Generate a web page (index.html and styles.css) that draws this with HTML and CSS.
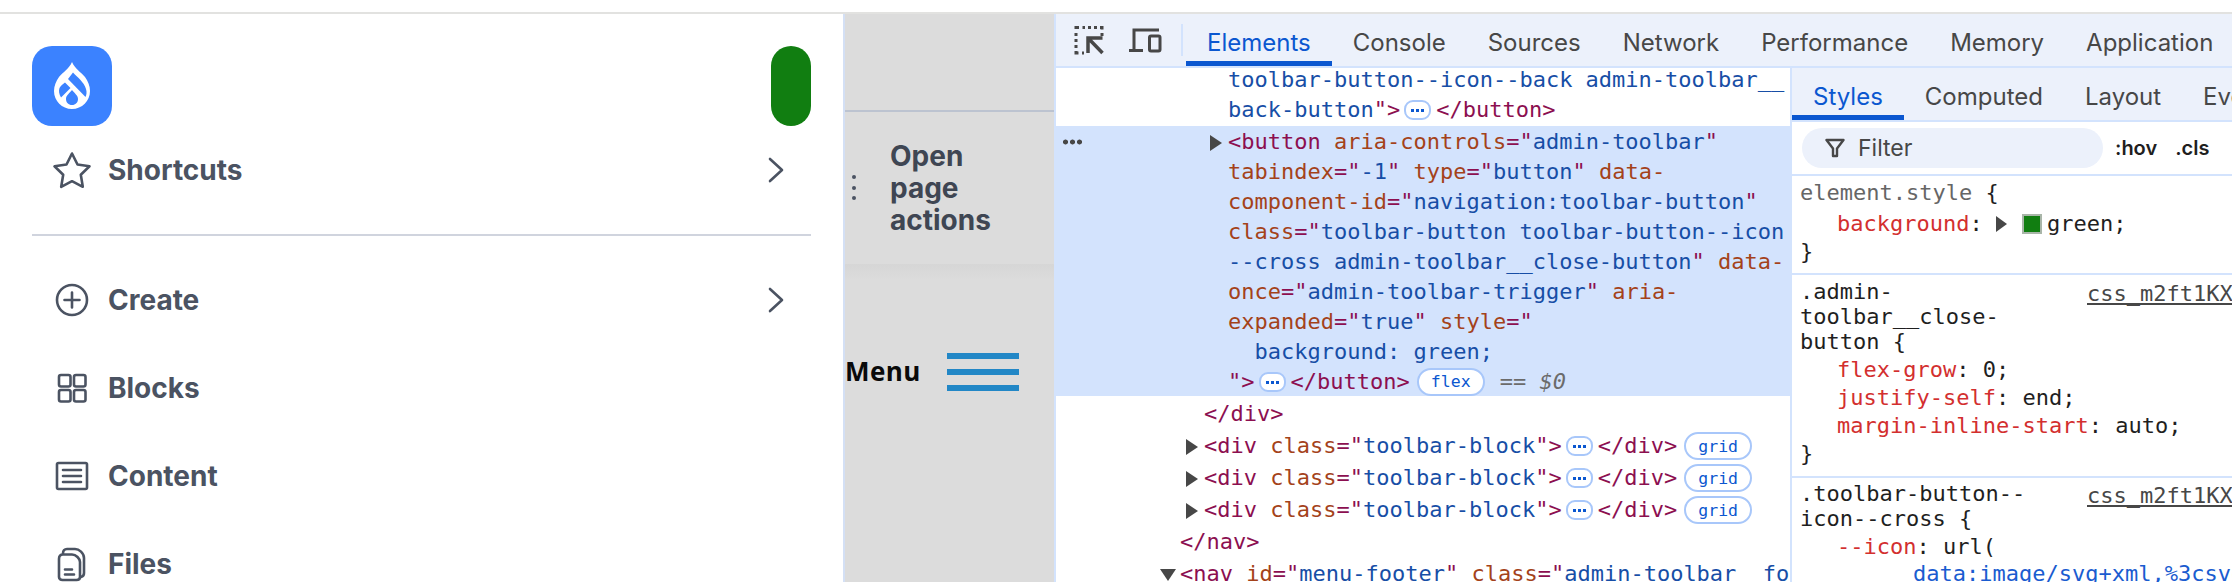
FILE: index.html
```html
<!DOCTYPE html>
<html lang="en">
<head>
<meta charset="utf-8">
<title>Drupal admin toolbar with DevTools</title>
<link rel="stylesheet" href="styles.css">
</head>
<body>
<div class="topbar"></div>
<main class="main">
  <aside class="admin">
    <div class="admin-head">
      <div class="logo">
        <svg viewBox="0 0 80 80" width="80" height="80"><path fill="#fff" d="M40 16C43 23 49 26 53 31C56 35 58 40 58 45C58 55 50 63 40 63C30 63 22 55 22 45C22 40 24 35 27 31C31 26 37 23 40 16Z"/><path fill="#3b82ff" d="M41 26.5C45 31 52 36 54 43C55 46 54.5 49 53.5 51L36 33ZM33 36.5L38.5 42L29 51.5C27 48 26.5 45 27.5 42C28.5 40 31 38 33 36.5ZM40 44C42 47 46 49 46 53C46 56.5 43.5 59 40 59C36.5 59 34 56.5 34 53C34 49 38 47 40 44Z"/></svg>
      </div>
      <div class="close-btn"></div>
    </div>
    <div class="nav-row">
      <svg class="nav-icon" viewBox="0 0 40 40"><path d="M20 3.500L25.500 14.500L37.500 16.300L28.800 24.800L30.800 36.800L20 31.200L9.200 36.800L11.200 24.800L2.500 16.300L14.500 14.500Z"/></svg>
      <span class="nav-label">Shortcuts</span>
      <svg class="chev" viewBox="0 0 16 26"><path d="M2 2L14 13L2 24"/></svg>
    </div>
    <div class="divider"></div>
    <div class="nav-row">
      <svg class="nav-icon" viewBox="0 0 40 40"><circle cx="20" cy="20" r="15"/><path d="M20 12.5V27.5M12.5 20H27.5"/></svg>
      <span class="nav-label">Create</span>
      <svg class="chev" viewBox="0 0 16 26"><path d="M2 2L14 13L2 24"/></svg>
    </div>
    <div class="nav-row">
      <svg class="nav-icon" viewBox="0 0 40 40"><rect x="7" y="7" width="11.5" height="11.5" rx="2"/><rect x="22" y="7" width="11.5" height="11.5" rx="2"/><rect x="7" y="22" width="11.5" height="11.5" rx="2"/><rect x="22" y="22" width="11.5" height="11.5" rx="2"/></svg>
      <span class="nav-label">Blocks</span>
    </div>
    <div class="nav-row">
      <svg class="nav-icon" viewBox="0 0 40 40"><rect x="5" y="7" width="30" height="26" rx="1.5"/><path d="M11 14H29M11 20H29M11 26H29"/></svg>
      <span class="nav-label">Content</span>
    </div>
    <div class="nav-row">
      <svg class="nav-icon" viewBox="0 0 40 40"><path d="M11 9.5C11 6.5 12.5 5 15 5H23C27 5 32 9 32 14V29C32 31 31 32.5 29 33"/><path d="M7 15C7 12 8.5 10.5 11 10.5H20C24 10.5 28 14.5 28 18V33C28 35 26.5 36 24.5 36H10.5C8.5 36 7 35 7 33Z"/><path d="M13 25.5H20M13 30.5H22"/></svg>
      <span class="nav-label">Files</span>
    </div>
  </aside>

  <section class="gutter">
    <div class="gutter-top"></div>
    <div class="page-actions">
      <svg class="kebab" viewBox="0 0 8 30" width="8" height="30"><circle cx="4" cy="4" r="2"/><circle cx="4" cy="15" r="2"/><circle cx="4" cy="25" r="2"/></svg>
      <span class="page-actions-label">Open<br>page<br>actions</span>
    </div>
    <div class="menu-zone">
      <span class="menu-label">Menu</span>
      <div class="burger"><i></i><i></i><i></i></div>
    </div>
  </section>

  <section class="devtools">
    <header class="dt-tabs">
      <svg class="dt-tool inspect" viewBox="0 0 30 30" width="30" height="30"><path class="dotted" d="M2 4V2.5H5M8.500 2.5H11M14 2.500H17M20 2.500H23M26 2.500H28V4.500M28 8V11M2 8V11M2 14V17M2 20V23M2 26V28H4.500M8 28H10"/><path class="arrow" d="M14 28V13H28.500M14 13L28.500 28"/></svg>
      <svg class="dt-tool device" viewBox="0 0 34 26" width="34" height="26"><path d="M6 22V3H31"/><path d="M1 23.500H15"/><rect x="21.500" y="9" width="10.500" height="15" rx="1.500"/></svg>
      <span class="dt-sep"></span>
      <span class="dt-tab active">Elements</span>
      <span class="dt-tab">Console</span>
      <span class="dt-tab">Sources</span>
      <span class="dt-tab">Network</span>
      <span class="dt-tab">Performance</span>
      <span class="dt-tab">Memory</span>
      <span class="dt-tab">Application</span>
    </header>
    <div class="dt-body">
      <div class="dom">
        <div class="ln lv3 first"><span class="v">toolbar-button--icon--back admin-toolbar__</span></div>
        <div class="ln lv3"><span class="v">back-button</span><span class="t">"&gt;</span><span class="dots"></span><span class="t">&lt;/button&gt;</span></div>
        <div class="selected">
          <div class="gutter-dots"></div>
          <div class="ln lv3"><i class="tri"></i><span class="t">&lt;button</span> <span class="a">aria-controls</span><span class="t">="</span><span class="v">admin-toolbar</span><span class="t">"</span></div>
          <div class="ln lv3"><span class="a">tabindex</span><span class="t">="</span><span class="v">-1</span><span class="t">"</span> <span class="a">type</span><span class="t">="</span><span class="v">button</span><span class="t">"</span> <span class="a">data-</span></div>
          <div class="ln lv3"><span class="a">component-id</span><span class="t">="</span><span class="v">navigation:toolbar-button</span><span class="t">"</span></div>
          <div class="ln lv3"><span class="a">class</span><span class="t">="</span><span class="v">toolbar-button toolbar-button--icon</span></div>
          <div class="ln lv3"><span class="v">--cross admin-toolbar__close-button</span><span class="t">"</span> <span class="a">data-</span></div>
          <div class="ln lv3"><span class="a">once</span><span class="t">="</span><span class="v">admin-toolbar-trigger</span><span class="t">"</span> <span class="a">aria-</span></div>
          <div class="ln lv3"><span class="a">expanded</span><span class="t">="</span><span class="v">true</span><span class="t">"</span> <span class="a">style</span><span class="t">="</span></div>
          <div class="ln lv3"><span class="v">  background: green;</span></div>
          <div class="ln lv3"><span class="t">"&gt;</span><span class="dots"></span><span class="t">&lt;/button&gt;</span><span class="pill">flex</span><span class="eq">== <em>$0</em></span></div>
        </div>
        <div class="ln tallrow lv2"><span class="t">&lt;/div&gt;</span></div>
        <div class="ln tallrow lv2"><i class="tri"></i><span class="t">&lt;div</span> <span class="a">class</span><span class="t">="</span><span class="v">toolbar-block</span><span class="t">"&gt;</span><span class="dots"></span><span class="t">&lt;/div&gt;</span><span class="pill">grid</span></div>
        <div class="ln tallrow lv2"><i class="tri"></i><span class="t">&lt;div</span> <span class="a">class</span><span class="t">="</span><span class="v">toolbar-block</span><span class="t">"&gt;</span><span class="dots"></span><span class="t">&lt;/div&gt;</span><span class="pill">grid</span></div>
        <div class="ln tallrow lv2"><i class="tri"></i><span class="t">&lt;div</span> <span class="a">class</span><span class="t">="</span><span class="v">toolbar-block</span><span class="t">"&gt;</span><span class="dots"></span><span class="t">&lt;/div&gt;</span><span class="pill">grid</span></div>
        <div class="ln tallrow lv1"><span class="t">&lt;/nav&gt;</span></div>
        <div class="ln tallrow lv1"><i class="tri down"></i><span class="t">&lt;nav</span> <span class="a">id</span><span class="t">="</span><span class="v">menu-footer</span><span class="t">"</span> <span class="a">class</span><span class="t">="</span><span class="v">admin-toolbar__footer</span></div>
      </div>
      <aside class="side">
        <div class="side-tabs">
          <span class="side-tab active">Styles</span>
          <span class="side-tab">Computed</span>
          <span class="side-tab">Layout</span>
          <span class="side-tab">Event Listeners</span>
        </div>
        <div class="filter-row">
          <div class="filter">
            <svg class="filter-icon" viewBox="0 0 20 20" width="20" height="20"><path d="M1.500 2H18.500L12 10.500V18H8V10.500Z"/></svg>
            <span>Filter</span>
          </div>
          <span class="fbtn hov">:hov</span>
          <span class="fbtn">.cls</span>
        </div>
        <div class="rule r1">
          <div class="sel muted">element.style <span class="ink">{</span></div>
          <div class="decl"><span class="p">background</span>: <i class="tri small"></i><i class="swatch"></i>green;</div>
          <div class="decl close">}</div>
        </div>
        <div class="rule r2">
          <div class="rule-head">
            <div class="sel">.admin-<br>toolbar__close-<br>button {</div>
            <span class="src">css_m2ft1KX.css</span>
          </div>
          <div class="decl gap"><span class="p">flex-grow</span>: 0;</div>
          <div class="decl"><span class="p">justify-self</span>: end;</div>
          <div class="decl"><span class="p">margin-inline-start</span>: auto;</div>
          <div class="decl close">}</div>
        </div>
        <div class="rule r3">
          <div class="rule-head">
            <div class="sel">.toolbar-button--<br>icon--cross {</div>
            <span class="src">css_m2ft1KX.css</span>
          </div>
          <div class="decl gap"><span class="p">--icon</span>: url(</div>
          <div class="decl data">data:image/svg+xml,%3csvg</div>
        </div>
      </aside>
    </div>
  </section>
</main>
</body>
</html>
```
FILE: styles.css
```css
* { box-sizing: border-box; }
html, body { margin: 0; height: 582px; overflow: hidden; background: #fff; }
body { font-family: "Inter", "Liberation Sans", sans-serif; }

.topbar { height: 14px; background: #fff; border-bottom: 2px solid #e2e2e0; }
.main { display: flex; height: 568px; }

/* Admin toolbar */
.admin { width: 843px; flex: none; padding: 32px 32px 0; background: #fff; }
.admin-head { display: flex; justify-content: space-between; height: 80px; }
.logo { width: 80px; height: 80px; border-radius: 20px; background: #3b82ff; }
.logo svg { display: block; }
.close-btn { width: 40px; height: 80px; border-radius: 20px; background: #117e11; }
.nav-row { display: flex; align-items: center; height: 88px; padding: 0 27px 0 20px; gap: 16px; }
.nav-icon { width: 40px; height: 40px; flex: none; fill: none; stroke: #4b5362; stroke-width: 2.6; stroke-linejoin: round; stroke-linecap: round; }
.nav-label { flex: 1; font-size: 28px; font-weight: 700; color: #4b5362; }
.chev { width: 16px; height: 26px; fill: none; stroke: #4b5362; stroke-width: 2.6; stroke-linecap: round; stroke-linejoin: round; }
.divider { height: 2px; margin: 20px 0; background: #d0d4de; }

/* Middle strip */
.gutter { width: 211px; flex: none; background: #dcdcdc; border-left: 2px solid #d4e0f5; display: flex; flex-direction: column; }
.gutter-top { height: 98px; border-bottom: 2px solid #bcc3d0; }
.page-actions { height: 152px; display: flex; align-items: center; padding-left: 5px; gap: 32px; }
.kebab { fill: #4b5362; flex: none; }
.page-actions-label { font-size: 28px; line-height: 32px; font-weight: 700; color: #3f4653; }
.menu-zone { flex: 1; display: flex; align-items: flex-start; gap: 26px; padding-top: 89px; background: linear-gradient(#d6d6d6, #dcdcdc 16px); }
.menu-label { font-family: "Open Sans", sans-serif; font-size: 26px; line-height: 36px; font-weight: 700; letter-spacing: 0.4px; color: #0a0a0a; }
.burger { display: flex; flex-direction: column; gap: 10px; width: 72px; }
.burger i { display: block; height: 6px; background: #2287c6; }

/* DevTools */
.devtools { flex: 1; min-width: 0; border-left: 2px solid #d3e3fd; display: flex; flex-direction: column; background: #fff; overflow: hidden; }
.dt-tabs { flex: none; height: 54px; display: flex; align-items: center; background: #ecf1fb; border-bottom: 2px solid #d3e3fd; padding-left: 18px; }
.dt-tool { flex: none; fill: none; stroke: #474747; }
.inspect { margin-right: 24px; }
.dotted { stroke-width: 3; }
.arrow { stroke-width: 3.500; }
.device { stroke-width: 3; }
.dt-sep { width: 2px; height: 32px; background: #d3e3fd; margin: 0 3px 0 19px; flex: none; }
.dt-tab { height: 52px; line-height: 58px; padding: 0 21px; font-size: 24px; color: #474747; white-space: nowrap; flex: none; }
.dt-tab.active { color: #0b57d0; box-shadow: inset 0 -5px 0 #0b57d0; }

.dt-body { flex: 1; min-height: 0; display: flex; }
.dom { width: 736px; flex: none; overflow: hidden; font-family: "DejaVu Sans Mono", "Liberation Mono", monospace; font-size: 22px; border-right: 2px solid #d3e3fd; }
.ln { height: 30px; line-height: 30px; white-space: pre; color: #1f1f1f; }
.ln.first { margin-top: -3px; }
.selected .ln { line-height: 32px; }
.tallrow { height: 32px; line-height: 35px; }
.lv3 { padding-left: 172px; }
.lv2 { padding-left: 148px; }
.lv1 { padding-left: 124px; }
.selected { margin-top: 1px; background: #d3e3fd; }
.t { color: #8c0f50; }
.a { color: #a4421a; }
.v { color: #174ea6; }
.tri { display: inline-block; vertical-align: middle; width: 0; height: 0; border-style: solid; border-width: 8px 0 8px 12px; border-color: transparent transparent transparent #474747; margin-left: -18px; margin-right: 6px; }
.tri.down { border-width: 12px 8px 0 8px; border-color: #474747 transparent transparent transparent; margin-left: -20px; margin-right: 4px; }
.gutter-dots { display: flow-root; height: 0; margin-left: 6px; width: 21px; }
.gutter-dots::after { content: ""; display: block; width: 21px; height: 6px; margin-top: 13px; background: radial-gradient(circle, #474747 2.200px, transparent 2.800px) 0 0 / 7px 6px repeat-x; }
.dots { display: inline-block; vertical-align: middle; width: 27px; height: 20px; padding: 0 4px; margin: -2px 5px 0 4px; border: 2px solid #a8c7fa; border-radius: 9px; background: radial-gradient(circle, #0b57d0 1.500px, transparent 2px) 0 center / 5px 5px repeat-x content-box, #fff; }
.pill { display: inline-flex; align-items: center; justify-content: center; vertical-align: middle; width: 68px; height: 28px; margin: -2px 0 0 7px; border: 2px solid #a8c7fa; border-radius: 14px; background: #fff; color: #0b57d0; font-size: 16.500px; }
.eq { margin-left: 15px; color: #6b6b6b; }
.eq em { font-style: italic; }

/* Styles pane */
.side { flex: 1; min-width: 0; overflow: hidden; font-family: "DejaVu Sans Mono", "Liberation Mono", monospace; font-size: 22px; color: #1f1f1f; }
.side-tabs { height: 54px; display: flex; background: #ecf1fb; border-bottom: 2px solid #d3e3fd; font-family: "Inter", sans-serif; font-size: 24px; }
.side-tab { height: 52px; line-height: 58px; padding: 0 21px; color: #474747; white-space: nowrap; flex: none; }
.side-tab.active { color: #0b57d0; box-shadow: inset 0 -5px 0 #0b57d0; }
.filter-row { height: 54px; display: flex; align-items: center; padding-left: 10px; border-bottom: 2px solid #d3e3fd; font-family: "Inter", sans-serif; white-space: nowrap; }
.filter { width: 301px; height: 40px; flex: none; display: flex; align-items: center; gap: 13px; padding-left: 23px; background: #ecf1fb; border-radius: 20px; color: #474747; font-size: 23px; }
.filter-icon { fill: none; stroke: #474747; stroke-width: 2.400; stroke-linejoin: round; }
.fbtn { font-size: 20px; font-weight: 600; color: #1f1f1f; margin-left: 18px; }
.fbtn.hov { margin-left: 12px; }
.rule { padding: 4px 0 0 8px; border-bottom: 2px solid #d3e3fd; white-space: nowrap; }
.r1 { height: 99px; }
.r2 { height: 203px; }
.r3 { border-bottom: 0; padding-top: 3px; }
.sel { line-height: 25px; flex: none; }
.muted { color: #666; }
.ink { color: #1f1f1f; }
.decl { height: 28px; line-height: 28px; padding-left: 37px; display: flex; align-items: center; white-space: pre; }
.decl.close { padding-left: 0; }
.gap { margin-top: 2px; }
.r1 .decl:nth-child(2) { margin-top: 5px; }
.p { color: #d32f2f; }
.tri.small { border-width: 8px 0 8px 11px; margin: 0 15px 0 0; flex: none; }
.swatch { flex: none; width: 20px; height: 20px; margin-right: 5px; background: #117e11; border: 2px solid #a9b6a9; }
.rule-head { display: flex; }
.rule-head .sel { width: 287px; }
.src { flex: none; color: #474747; line-height: 25px; height: 25px; margin-top: 2px; text-decoration: underline; }
.data { color: #1a5cd0; padding-left: 113px; height: 25px; line-height: 25px; }
```
